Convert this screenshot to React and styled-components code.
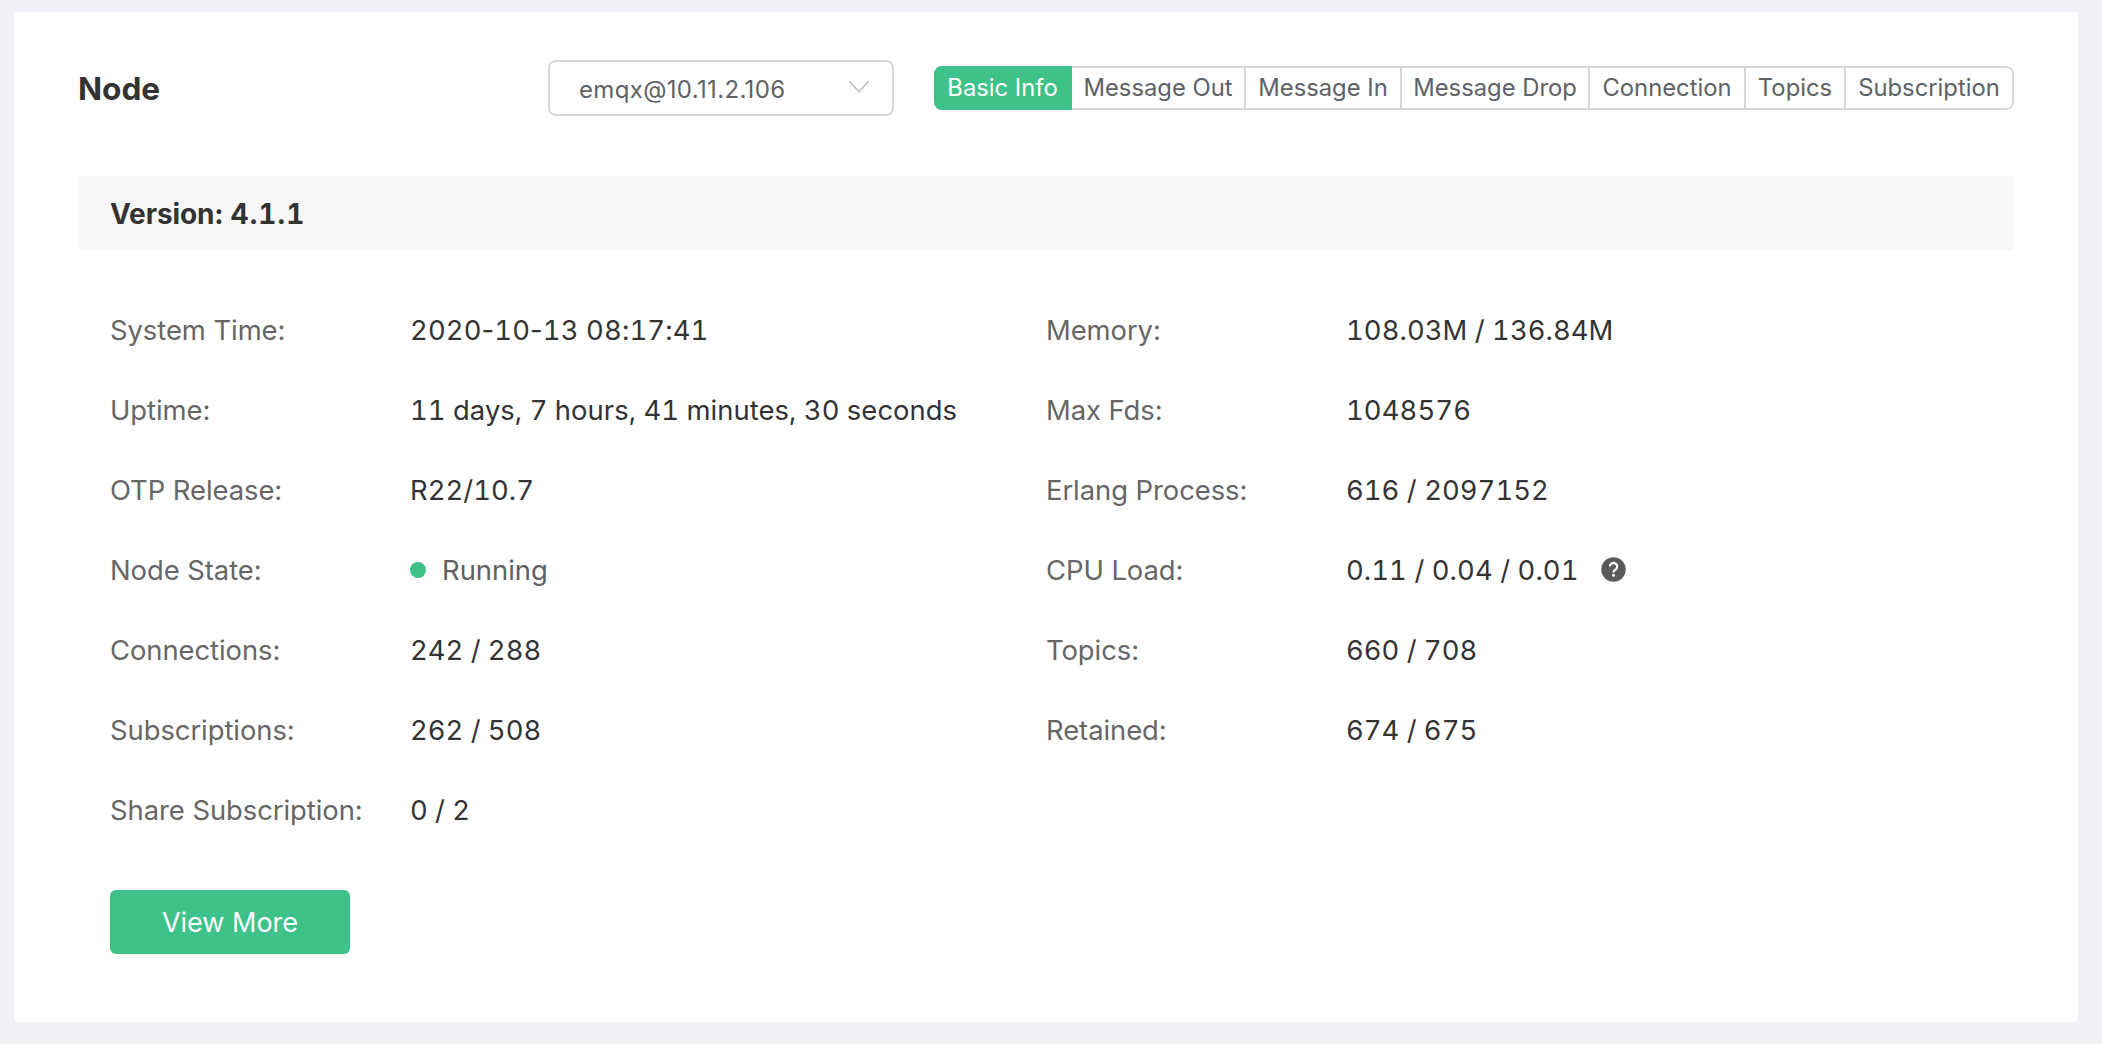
import React from "react";
import styled, { createGlobalStyle } from "styled-components";

const color = {
  page: "#f0f1f6",
  panel: "#ffffff",
  stripe: "#f7f7f7",
  line: "#d8d8d8",
  brand: "#3ec28a",
  title: "#333333",
  label: "#666666",
  control: "#606266",
};

const GlobalStyle = createGlobalStyle`
  * { box-sizing: border-box; }
  body {
    margin: 0;
    background: ${color.page};
    font-family: Inter, "Liberation Sans", sans-serif;
    color: ${color.title};
  }
`;

const Page = styled.main`
  min-height: 1044px;
  padding: 12px 24px 22px 14px;
`;

const Card = styled.section`
  height: 1010px;
  padding: 48px 64px;
  background: ${color.panel};
  border-radius: 4px;
`;

const Header = styled.header`
  display: flex;
  align-items: center;
  height: 56px;
  margin-bottom: 60px;
`;

const Title = styled.h1`
  flex: 1;
  margin: 0;
  padding-top: 2px;
  font-size: 31.6px;
  font-weight: 700;
  line-height: 40px;
`;

const Select = styled.button`
  display: flex;
  align-items: center;
  justify-content: space-between;
  width: 346px;
  height: 56px;
  margin-right: 40px;
  padding: 3px 22px 0 29px;
  border: 2px solid ${color.line};
  border-radius: 8px;
  background: ${color.panel};
  color: ${color.control};
  font: 400 24px/40px Inter, "Liberation Sans", sans-serif;
  letter-spacing: 0.35px;
`;

const Chevron = styled.svg`
  width: 22px;
  height: 14px;
  margin-top: -5px;
  fill: none;
  stroke: #c0c4cc;
  stroke-width: 1.8;
`;

const Tabs = styled.nav`
  display: flex;
  height: 44px;
`;

const Tab = styled.button`
  width: ${(p) => p.$width}px;
  padding: 0;
  border: 2px solid ${(p) => (p.$active ? color.brand : color.line)};
  border-left-width: 0;
  background: ${(p) => (p.$active ? color.brand : color.panel)};
  color: ${(p) => (p.$active ? "#ffffff" : color.control)};
  font: 400 23.8px/38px Inter, "Liberation Sans", sans-serif;
  white-space: nowrap;

  &:first-child {
    padding-right: 1px;
    border-left-width: 2px;
    border-radius: 8px 0 0 8px;
  }
  &:last-child {
    border-radius: 0 8px 8px 0;
  }
`;

const VersionBar = styled.div`
  display: flex;
  align-items: center;
  gap: 7px;
  height: 74px;
  margin-bottom: 40px;
  padding: 1px 32px 0;
  border-radius: 4px;
  background: ${color.stripe};
  font-size: 28px;
  font-weight: 700;
  letter-spacing: -0.12px;
`;

const VersionNumber = styled.span`
  font-variant-numeric: tabular-nums;
  letter-spacing: 1.1px;
`;

const Details = styled.div`
  display: grid;
  grid-template-columns: 936px 1fr;
  padding-left: 32px;
`;

const Column = styled.dl`
  margin: 0;
`;

const Row = styled.div`
  display: flex;
  align-items: center;
  height: 80px;
  font-size: 27.4px;
  line-height: 40px;
  white-space: nowrap;
`;

const Label = styled.dt`
  width: 300px;
  color: ${color.label};
  letter-spacing: -0.05px;
`;

const Value = styled.dd`
  display: flex;
  align-items: center;
  margin: 0;
  font-variant-numeric: tabular-nums;
  letter-spacing: ${(p) => p.$spacing || 0}px;
`;

const Dash = styled.span`
  font-variant-numeric: normal;
`;

const Dot = styled.span`
  width: 16px;
  height: 16px;
  margin-right: 16px;
  border-radius: 50%;
  background: ${color.brand};
`;

const State = styled.span`
  color: #606060;
`;

const Help = styled.svg`
  width: 25px;
  height: 25px;
  margin: -1px 0 0 22px;
`;

const Action = styled.button`
  display: block;
  width: 240px;
  height: 64px;
  margin: 40px 0 0 32px;
  padding: 1px 0 0;
  border: 0;
  border-radius: 6px;
  background: ${color.brand};
  box-shadow: 0 4px 0 rgba(0, 0, 0, 0.016);
  color: #ffffff;
  font: 400 27px/63px Inter, "Liberation Sans", sans-serif;
`;

const tabs = [
  ["Basic Info", 138],
  ["Message Out", 174],
  ["Message In", 156],
  ["Message Drop", 188],
  ["Connection", 156],
  ["Topics", 100],
  ["Subscription", 168],
];

function DateTime() {
  return (
    <span>
      2020<Dash>-</Dash>10<Dash>-</Dash>13 08:17:41
    </span>
  );
}

function HelpIcon() {
  return (
    <Help viewBox="0 0 25 25" aria-hidden="true">
      <circle cx="12.5" cy="12.5" r="12.2" fill="#5a5a5a" />
      <path
        d="M8.8 9.6a3.7 3.5 0 1 1 5.7 2.9c-1.2.8-2 1.4-2 2.9"
        fill="none"
        stroke="#fff"
        strokeWidth="2.3"
      />
      <circle cx="12.5" cy="18.2" r="1.5" fill="#fff" />
    </Help>
  );
}

const left = [
  ["System Time:", <DateTime />, 0.13],
  ["Uptime:", "11 days, 7 hours, 41 minutes, 30 seconds", 0.05],
  ["OTP Release:", "R22/10.7", 0.05],
  ["Node State:", <><Dot /><State>Running</State></>],
  ["Connections:", "242 / 288"],
  ["Subscriptions:", "262 / 508"],
  ["Share Subscription:", "0 / 2"],
];

const right = [
  ["Memory:", "108.03M / 136.84M", 0.06],
  ["Max Fds:", "1048576", 0.1],
  ["Erlang Process:", "616 / 2097152", 0.05],
  ["CPU Load:", <>0.11 / 0.04 / 0.01<HelpIcon /></>, 0.08],
  ["Topics:", "660 / 708"],
  ["Retained:", "674 / 675"],
];

function DetailColumn({ rows }) {
  return (
    <Column>
      {rows.map(([label, value, spacing]) => (
        <Row key={label}>
          <Label>{label}</Label>
          <Value $spacing={spacing}>{value}</Value>
        </Row>
      ))}
    </Column>
  );
}

export default function App() {
  return (
    <>
      <GlobalStyle />
      <Page>
        <Card>
          <Header>
            <Title>Node</Title>
            <Select>
              emqx@10.11.2.106
              <Chevron viewBox="0 0 22 14" aria-hidden="true">
                <path d="M1.3 1.2 11 11.9 20.7 1.2" />
              </Chevron>
            </Select>
            <Tabs>
              {tabs.map(([name, width], i) => (
                <Tab key={name} $width={width} $active={i === 0}>
                  {name}
                </Tab>
              ))}
            </Tabs>
          </Header>
          <VersionBar>
            <span>Version:</span>
            <VersionNumber>4.1.1</VersionNumber>
          </VersionBar>
          <Details>
            <DetailColumn rows={left} />
            <DetailColumn rows={right} />
          </Details>
          <Action>View More</Action>
        </Card>
      </Page>
    </>
  );
}
